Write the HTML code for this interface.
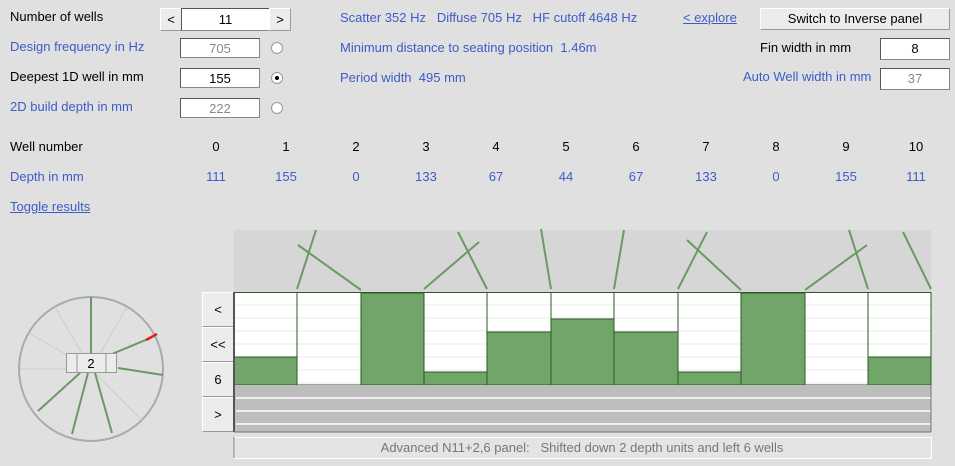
<!DOCTYPE html>
<html><head><style>
body{margin:0;width:955px;height:466px;background:#e0e0e0;font-family:"Liberation Sans",sans-serif;font-size:13px;position:relative;overflow:hidden}
.a{position:absolute;white-space:nowrap}
.b{color:#3c5cc8}
.k{color:#000}
.in{position:absolute;background:#fff;border:1px solid #888;border-top-color:#555;border-left-color:#555;text-align:center;height:20px;line-height:20px;box-sizing:border-box;font-size:13px}
.g{color:#888}
.btn{position:absolute;background:#ececec;border:1px solid #999;border-top-color:#fff;border-left-color:#fff;text-align:center;box-sizing:border-box}
.rad{position:absolute;width:12px;height:12px;border-radius:50%;background:#fff;border:1px solid #999;box-sizing:border-box}
</style></head><body>
<div class="a k" style="left:10px;top:9px">Number of wells</div>
<div class="btn" style="left:160px;top:8px;width:22px;height:23px;line-height:21px">&lt;</div>
<div class="in" style="left:181px;top:8px;width:89px;height:23px;line-height:22px">11</div>
<div class="btn" style="left:269px;top:8px;width:22px;height:23px;line-height:21px">&gt;</div>
<div class="a b" style="left:10px;top:39px">Design frequency in Hz</div>
<div class="in g" style="left:180px;top:38px;width:80px">705</div>
<div class="rad" style="left:271px;top:42px"></div>
<div class="a k" style="left:10px;top:69px">Deepest 1D well in mm</div>
<div class="in" style="left:180px;top:68px;width:80px">155</div>
<div class="rad" style="left:271px;top:72px"><div style="position:absolute;left:3px;top:3px;width:4px;height:4px;background:#000;border-radius:50%"></div></div>
<div class="a b" style="left:10px;top:99px">2D build depth in mm</div>
<div class="in g" style="left:180px;top:98px;width:80px">222</div>
<div class="rad" style="left:271px;top:102px"></div>

<div class="a b" style="left:340px;top:10px">Scatter 352 Hz&nbsp;&nbsp; Diffuse 705 Hz&nbsp;&nbsp; HF cutoff 4648 Hz</div>
<div class="a b" style="left:340px;top:40px">Minimum distance to seating position&nbsp; 1.46m</div>
<div class="a b" style="left:340px;top:70px">Period width&nbsp; 495 mm</div>
<div class="a b" style="left:683px;top:10px;text-decoration:underline">&lt; explore</div>
<div class="btn" style="left:760px;top:8px;width:190px;height:22px;line-height:20px">Switch to Inverse panel</div>
<div class="a k" style="left:760px;top:40px">Fin width in mm</div>
<div class="in" style="left:880px;top:38px;width:70px;height:22px">8</div>
<div class="a b" style="left:743px;top:69px">Auto Well width in mm</div>
<div class="in g" style="left:880px;top:68px;width:70px;height:22px">37</div>

<div class="a k" style="left:10px;top:139px">Well number</div>
<div class="a b" style="left:10px;top:169px">Depth in mm</div>
<div class="a b" style="left:10px;top:199px;text-decoration:underline">Toggle results</div>
<div id="nums"></div>

<div class="btn" style="left:202px;top:292px;width:32px;height:35px;line-height:33px">&lt;</div>
<div class="btn" style="left:202px;top:327px;width:32px;height:35px;line-height:33px">&lt;&lt;</div>
<div class="btn" style="left:202px;top:362px;width:32px;height:35px;line-height:33px">6</div>
<div class="btn" style="left:202px;top:397px;width:32px;height:35px;line-height:33px">&gt;</div>

<svg class="a" style="left:0;top:0" width="955" height="466">
<rect x="234" y="230" width="697" height="62" fill="#d6d6d6"/>
<g id="wells"></g>
<rect x="234" y="385" width="697" height="47" fill="#bdbdbd"/>
<g stroke="#fff" stroke-width="1.5"><line x1="236" y1="398" x2="931" y2="398"/><line x1="236" y1="411" x2="931" y2="411"/><line x1="236" y1="424" x2="931" y2="424"/></g>
<line x1="234" y1="292" x2="234" y2="432" stroke="#555" stroke-width="2"/>
<line x1="931" y1="385" x2="931" y2="432" stroke="#777"/>
<line x1="234" y1="432" x2="931" y2="432" stroke="#777"/>
<g stroke="#6a9a63" stroke-width="2">
<line x1="297" y1="289" x2="316" y2="230"/><line x1="298" y1="245" x2="361" y2="290"/>
<line x1="424" y1="289" x2="479" y2="242"/><line x1="458" y1="232" x2="487" y2="289"/>
<line x1="541" y1="229" x2="551" y2="289"/><line x1="614" y1="289" x2="624" y2="230"/>
<line x1="687" y1="240" x2="741" y2="290"/><line x1="678" y1="289" x2="707" y2="232"/>
<line x1="805" y1="290" x2="867" y2="245"/><line x1="849" y1="230" x2="868" y2="289"/>
<line x1="903" y1="232" x2="931" y2="289"/>
</g>
<rect x="234.5" y="437.5" width="697" height="21" fill="#e4e4e4" stroke="#fff"/>
<line x1="234" y1="437" x2="234" y2="458" stroke="#777"/>
<text x="582" y="452" text-anchor="middle" font-family="Liberation Sans" font-size="13" fill="#777">Advanced N11+2,6 panel:&#160;&#160; Shifted down 2 depth units and left 6 wells</text>
<circle cx="91" cy="369" r="72" fill="#e0e0e0" stroke="#aaa" stroke-width="2"/>
<g stroke="#ccc" stroke-width="1">
<line x1="91" y1="369" x2="127" y2="307"/><line x1="91" y1="369" x2="55" y2="307"/><line x1="91" y1="369" x2="29" y2="333"/><line x1="91" y1="369" x2="20" y2="369"/><line x1="91" y1="369" x2="142" y2="420"/>
</g>
<g stroke="#6a9a63" stroke-width="2">
<line x1="91" y1="355" x2="91" y2="297"/><line x1="112" y1="354" x2="148" y2="339"/><line x1="118" y1="368" x2="163" y2="375"/>
<line x1="80" y1="373" x2="38" y2="411"/><line x1="88" y1="373" x2="72" y2="434"/><line x1="95" y1="373" x2="112" y2="433"/>
</g>
<line x1="146" y1="340" x2="157" y2="334" stroke="#d22" stroke-width="2.5"/>
<rect x="66.5" y="353.5" width="50" height="19" fill="#ececec" stroke="#999"/>
<line x1="77" y1="354" x2="77" y2="372" stroke="#999"/><line x1="106" y1="354" x2="106" y2="372" stroke="#999"/>
<text x="91" y="368" text-anchor="middle" font-family="Liberation Sans" font-size="13">2</text>
</svg>
<script>
var xs=[234,297,361,424,487,551,614,678,741,805,868,931];
var tops=[357,385,293,372,332,319,332,372,293,385,357];
var d=[111,155,0,133,67,44,67,133,0,155,111];
var s='';
for(var i=0;i<11;i++){var x=xs[i],w=xs[i+1]-x;
s+='<rect x="'+x+'" y="292" width="'+w+'" height="93" fill="#fff"/>';
for(var y=305;y<385;y+=13)s+='<line x1="'+x+'" y1="'+y+'" x2="'+(x+w)+'" y2="'+y+'" stroke="#e8e8e8"/>';
if(tops[i]<385)s+='<rect x="'+x+'" y="'+tops[i]+'" width="'+w+'" height="'+(385-tops[i])+'" fill="#71a569" stroke="#2c5a26"/>';
s+='<line x1="'+x+'" y1="292" x2="'+x+'" y2="385" stroke="#2c5a26"/>';}
s+='<line x1="931" y1="292" x2="931" y2="385" stroke="#2c5a26"/><line x1="234" y1="292.5" x2="931" y2="292.5" stroke="#2c5a26"/><line x1="234" y1="385" x2="931" y2="385" stroke="#2c5a26"/>';
document.getElementById('wells').innerHTML=s;
var n='';var cx=[216,286,356,426,496,566,636,706,776,846,916];
for(i=0;i<11;i++){n+='<div class="a k" style="left:'+(cx[i]-20)+'px;width:40px;text-align:center;top:139px">'+i+'</div>';
n+='<div class="a b" style="left:'+(cx[i]-20)+'px;width:40px;text-align:center;top:169px">'+d[i]+'</div>';}
document.getElementById('nums').innerHTML=n;
</script>
</body></html>
